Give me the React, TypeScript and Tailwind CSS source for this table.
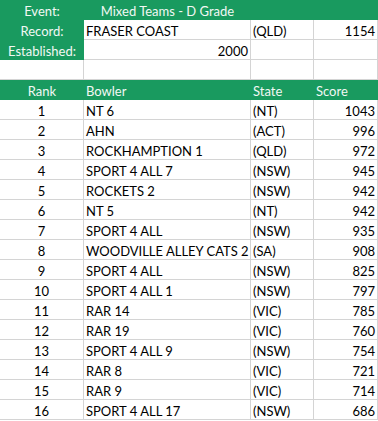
import React from 'react';

type Row = { rank: number; bowler: string; state: string; score: number };

const rows: Row[] = [
  { rank: 1, bowler: 'NT 6', state: '(NT)', score: 1043 },
  { rank: 2, bowler: 'AHN', state: '(ACT)', score: 996 },
  { rank: 3, bowler: 'ROCKHAMPTION 1', state: '(QLD)', score: 972 },
  { rank: 4, bowler: 'SPORT 4 ALL 7', state: '(NSW)', score: 945 },
  { rank: 5, bowler: 'ROCKETS 2', state: '(NSW)', score: 942 },
  { rank: 6, bowler: 'NT 5', state: '(NT)', score: 942 },
  { rank: 7, bowler: 'SPORT 4 ALL', state: '(NSW)', score: 935 },
  { rank: 8, bowler: 'WOODVILLE ALLEY CATS 2', state: '(SA)', score: 908 },
  { rank: 9, bowler: 'SPORT 4 ALL', state: '(NSW)', score: 825 },
  { rank: 10, bowler: 'SPORT 4 ALL 1', state: '(NSW)', score: 797 },
  { rank: 11, bowler: 'RAR 14', state: '(VIC)', score: 785 },
  { rank: 12, bowler: 'RAR 19', state: '(VIC)', score: 760 },
  { rank: 13, bowler: 'SPORT 4 ALL 9', state: '(NSW)', score: 754 },
  { rank: 14, bowler: 'RAR 8', state: '(VIC)', score: 721 },
  { rank: 15, bowler: 'RAR 9', state: '(VIC)', score: 714 },
  { rank: 16, bowler: 'SPORT 4 ALL 17', state: '(NSW)', score: 686 },
];

// plain white cell with excel gridlines
const cell = 'h-[20px] border-r border-b border-[#d4d4d4] px-[2px] pt-[2px] leading-[18px] whitespace-nowrap';
const green = 'h-[20px] bg-[#199a5f] text-[#f2f8f4] px-[2px] pt-[2px] leading-[18px] whitespace-nowrap';

const App: React.FC = () => {
  return (
    <div className="w-[378px] h-[421px] overflow-hidden bg-white text-black text-[13px]" style={{ fontFamily: 'Lato, "Open Sans", sans-serif' }}>
      <div className="grid grid-cols-[84px_167px_63px_64px]">
        {/* Event */}
        <div className={`${green} text-center`}>Event:</div>
        <div className={`${green} text-center`}>Mixed Teams - D Grade</div>
        <div className={green}></div>
        <div className={green}></div>

        {/* Record */}
        <div className={`${green} text-center`}>Record:</div>
        <div className={cell}>FRASER COAST</div>
        <div className={cell}>(QLD)</div>
        <div className={`${cell} text-right`}>1154</div>

        {/* Established */}
        <div className={`${green} text-center`}>Established:</div>
        <div className={`${cell} text-right`}>2000</div>
        <div className={cell}></div>
        <div className={cell}></div>

        {/* spacer */}
        <div className={cell}></div>
        <div className={cell}></div>
        <div className={cell}></div>
        <div className={cell}></div>

        {/* Header */}
        <div className={`${green} text-center`}>Rank</div>
        <div className={green}>Bowler</div>
        <div className={green}>State</div>
        <div className={green}>Score</div>

        {rows.map((r) => (
          <React.Fragment key={r.rank}>
            <div className={`${cell} text-center`}>{r.rank}</div>
            <div className={cell}>{r.bowler}</div>
            <div className={cell}>{r.state}</div>
            <div className={`${cell} text-right`}>{r.score}</div>
          </React.Fragment>
        ))}
      </div>
    </div>
  );
};

export default App;
